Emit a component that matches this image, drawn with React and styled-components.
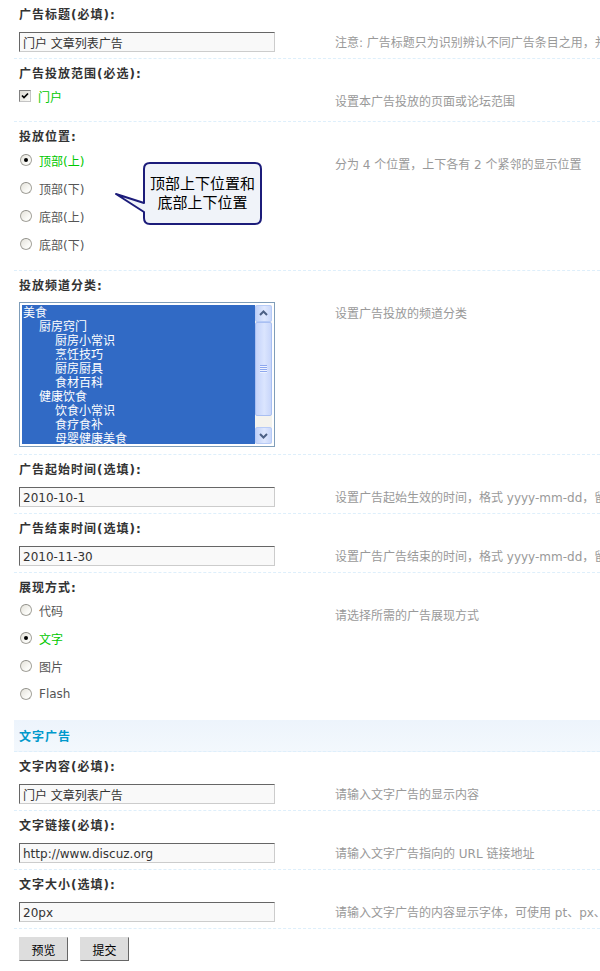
import styled, { createGlobalStyle } from 'styled-components'

const GlobalStyle = createGlobalStyle`
  html, body {
    margin: 0;
    padding: 0;
    background: #fff;
  }
  body {
    font: 12px "DejaVu Sans", "Noto Sans CJK SC", sans-serif;
    color: #333;
    overflow: hidden;
  }
  * {
    box-sizing: border-box;
  }
`

const channels = [
  ['美食', 0],
  ['厨房窍门', 1],
  ['厨房小常识', 2],
  ['烹饪技巧', 2],
  ['厨房厨具', 2],
  ['食材百科', 2],
  ['健康饮食', 1],
  ['饮食小常识', 2],
  ['食疗食补', 2],
  ['母婴健康美食', 2],
]

function Radio({ checked, children }) {
  return (
    <OptionRow $checked={checked}>
      <RadioDot $checked={checked} />
      {children}
    </OptionRow>
  )
}

function Tick() {
  return (
    <svg width="10" height="10" viewBox="0 0 10 10">
      <path d="M2 4.5 L4 6.5 L8 2.5" fill="none" stroke="#000" strokeWidth="1.7" />
    </svg>
  )
}

function Chevron({ down }) {
  return (
    <svg width="11" height="11" viewBox="0 0 11 11">
      <polyline
        points={down ? '2,4 5.5,7.5 9,4' : '2,7 5.5,3.5 9,7'}
        fill="none"
        stroke="#4d6185"
        strokeWidth="2"
      />
    </svg>
  )
}

export default function App() {
  return (
    <Page>
      <GlobalStyle />

      <Group $first>
        <Label>广告标题(必填):</Label>
        <Field>
          <Value>
            <TextInput defaultValue="门户 文章列表广告" readOnly />
          </Value>
          <Tips>注意: 广告标题只为识别辨认不同广告条目之用，并不会在广告中显示</Tips>
        </Field>
      </Group>

      <Group>
        <Label>广告投放范围(必选):</Label>
        <Field>
          <Value $pt={0} $pb={13}>
            <OptionRow $checked>
              <CheckBox>
                <Tick />
              </CheckBox>
              门户
            </OptionRow>
          </Value>
          <Tips>设置本广告投放的页面或论坛范围</Tips>
        </Field>
      </Group>

      <Group>
        <Label>投放位置:</Label>
        <Field>
          <OptionList>
            <Radio checked>顶部(上)</Radio>
            <Radio>顶部(下)</Radio>
            <Radio>底部(上)</Radio>
            <Radio>底部(下)</Radio>
          </OptionList>
          <Tips>分为 4 个位置，上下各有 2 个紧邻的显示位置</Tips>
        </Field>
      </Group>

      <Group>
        <Label>投放频道分类:</Label>
        <Field>
          <Value $pt={6} $pb={7}>
            <ListBox>
              <Options>
                {channels.map(([name, level]) => (
                  <OptionItem key={name + level} $level={level}>
                    {name}
                  </OptionItem>
                ))}
              </Options>
              <ScrollBar>
                <ScrollButton>
                  <Chevron />
                </ScrollButton>
                <Thumb>
                  <svg width="7" height="8" viewBox="0 0 7 8">
                    <path d="M0 0.5H7M0 2.5H7M0 4.5H7M0 6.5H7" stroke="#8ea8ee" />
                    <path d="M0 1.5H7M0 3.5H7M0 5.5H7M0 7.5H7" stroke="#eef3ff" />
                  </svg>
                </Thumb>
                <Track />
                <ScrollButton>
                  <Chevron down />
                </ScrollButton>
              </ScrollBar>
            </ListBox>
          </Value>
          <Tips>设置广告投放的频道分类</Tips>
        </Field>
      </Group>

      <Group>
        <Label>广告起始时间(选填):</Label>
        <Field>
          <Value>
            <TextInput defaultValue="2010-10-1" readOnly />
          </Value>
          <Tips>设置广告起始生效的时间，格式 yyyy-mm-dd，留空为不限制起始时间</Tips>
        </Field>
      </Group>

      <Group>
        <Label>广告结束时间(选填):</Label>
        <Field>
          <Value>
            <TextInput defaultValue="2010-11-30" readOnly />
          </Value>
          <Tips>设置广告广告结束的时间，格式 yyyy-mm-dd，留空为不限制结束时间</Tips>
        </Field>
      </Group>

      <Group $noline>
        <Label>展现方式:</Label>
        <Field>
          <OptionList $pt={0}>
            <Radio>代码</Radio>
            <Radio checked>文字</Radio>
            <Radio>图片</Radio>
            <Radio>Flash</Radio>
          </OptionList>
          <Tips>请选择所需的广告展现方式</Tips>
        </Field>
      </Group>

      <Partition>文字广告</Partition>

      <Group>
        <Label>文字内容(必填):</Label>
        <Field>
          <Value>
            <TextInput defaultValue="门户 文章列表广告" readOnly />
          </Value>
          <Tips>请输入文字广告的显示内容</Tips>
        </Field>
      </Group>

      <Group>
        <Label>文字链接(必填):</Label>
        <Field>
          <Value>
            <TextInput defaultValue="http://www.discuz.org" readOnly />
          </Value>
          <Tips>请输入文字广告指向的 URL 链接地址</Tips>
        </Field>
      </Group>

      <Group>
        <Label>文字大小(选填):</Label>
        <Field>
          <Value>
            <TextInput defaultValue="20px" readOnly />
          </Value>
          <Tips>请输入文字广告的内容显示字体，可使用 pt、px、em 为单位</Tips>
        </Field>
      </Group>

      <ButtonRow>
        <Button type="button">预览</Button>
        <Button type="button">提交</Button>
      </ButtonRow>

      <Callout>
        <svg width="150" height="66" viewBox="0 0 150 66">
          <path
            d="M36 2 H141 Q147 2 147 8 V57 Q147 63 141 63 H36 Q30 63 30 57 V51 L2 33 L30 42 V8 Q30 2 36 2 Z"
            fill="#f0f3f9"
            stroke="#1c1c7a"
            strokeWidth="2"
            strokeLinejoin="round"
          />
        </svg>
        <CalloutText>
          顶部上下位置和
          <br />
          底部上下位置
        </CalloutText>
      </Callout>
    </Page>
  )
}

const Page = styled.div`
  position: relative;
  width: 600px;
  height: 971px;
  padding-left: 14px;
  overflow: hidden;
`

const Group = styled.div`
  border-top: ${(p) => (p.$first ? '1px dashed #deeffb' : '0')};
  border-bottom: ${(p) => (p.$noline ? '0' : '1px dashed #deeffb')};
  margin-top: ${(p) => (p.$first ? '-1px' : '0')};
`

const Label = styled.div`
  height: 25px;
  padding: 1px 0 0 5px;
  display: flex;
  align-items: center;
  font-weight: 700;
  letter-spacing: 1px;
  color: #333;
  white-space: nowrap;
`

const Field = styled.div`
  display: grid;
  grid-template-columns: 321px 1fr;
`

const Value = styled.div`
  padding: ${(p) => (p.$pt ?? 7)}px 0 ${(p) => (p.$pb ?? 6)}px 5px;
`

const Tips = styled.div`
  padding-top: 10px;
  line-height: 16px;
  color: #999;
  white-space: nowrap;
`

const TextInput = styled.input`
  display: block;
  width: 256px;
  height: 20px;
  margin: 0;
  padding: 1px 3px 0;
  border: 1px solid;
  border-color: #666 #ccc #ccc #666;
  background: #f9f9f9;
  font: 12px "DejaVu Sans", "Noto Sans CJK SC", sans-serif;
  color: #333;
  outline: none;
`

const OptionList = styled.div`
  display: flex;
  flex-direction: column;
  gap: 4px;
  padding: ${(p) => (p.$pt ?? 1)}px 0 14px 5px;
`

const OptionRow = styled.div`
  height: 24px;
  display: flex;
  align-items: center;
  gap: 7px;
  color: ${(p) => (p.$checked ? '#00c800' : '#555')};
`

const RadioDot = styled.span`
  position: relative;
  width: 12px;
  height: 12px;
  margin-left: 1px;
  border-radius: 50%;
  border: 1px solid #a4a39c;
  border-top-color: #8f8e88;
  background: linear-gradient(135deg, #e4e2da, #fbfbf8 70%);

  &::after {
    content: '';
    display: ${(p) => (p.$checked ? 'block' : 'none')};
    position: absolute;
    left: 3px;
    top: 3px;
    width: 4px;
    height: 4px;
    border-radius: 50%;
    background: #000;
  }
`

const CheckBox = styled.span`
  width: 12px;
  height: 12px;
  display: flex;
  align-items: center;
  justify-content: center;
  border: 1px solid #808080;
  border-right-color: #c4c4c4;
  border-bottom-color: #c4c4c4;
  background: linear-gradient(135deg, #dcdad2, #fbfbf8);
`

const ListBox = styled.div`
  display: flex;
  width: 256px;
  height: 145px;
  padding: 2px;
  border: 1px solid #7f9db9;
  background: #fff;
`

const Options = styled.div`
  flex: 1;
  overflow: hidden;
  background: #316ac5;
`

const OptionItem = styled.div`
  height: 14px;
  line-height: 14px;
  padding-left: ${(p) => 1 + p.$level * 16}px;
  color: #fff;
  font-family: "Noto Sans CJK SC", sans-serif;
  white-space: nowrap;
`

const ScrollBar = styled.div`
  width: 17px;
  display: flex;
  flex-direction: column;
  background: #f4f3ee;
`

const ScrollButton = styled.div`
  height: 17px;
  display: flex;
  align-items: center;
  justify-content: center;
  border: 1px solid #b7cbf7;
  border-radius: 2px;
  background: linear-gradient(90deg, #c1d1f8, #dfe8fe 55%, #c9d7fa);
`

const Thumb = styled.div`
  height: 94px;
  display: flex;
  align-items: center;
  justify-content: center;
  border: 1px solid #a9bff2;
  border-radius: 2px;
  background: linear-gradient(90deg, #c4d3fa, #dbe5fe 55%, #c8d6fa);
`

const Track = styled.div`
  flex: 1;
`

const Partition = styled.div`
  height: 32px;
  padding: 0 0 0 5px;
  display: flex;
  align-items: center;
  border-bottom: 1px dashed #deeffb;
  background: linear-gradient(#edf4fc, #f3f8fd);
  color: #0099cc;
  font-weight: 700;
  letter-spacing: 1px;
`

const ButtonRow = styled.div`
  display: flex;
  gap: 12px;
  padding: 8px 0 0 5px;
`

const Button = styled.button`
  width: 49px;
  height: 24px;
  margin: 0;
  padding: 0;
  border: 1px solid;
  border-color: #ddd #666 #666 #ddd;
  background: #ddd;
  font: 12px "Noto Sans CJK SC", sans-serif;
  color: #000;
`

const Callout = styled.div`
  position: absolute;
  left: 114px;
  top: 161px;
  width: 150px;
  height: 66px;

  svg {
    display: block;
  }
`

const CalloutText = styled.div`
  position: absolute;
  left: 30px;
  top: 12px;
  width: 117px;
  text-align: center;
  font: 15px/19px "Noto Sans CJK SC", sans-serif;
  color: #000;
`
